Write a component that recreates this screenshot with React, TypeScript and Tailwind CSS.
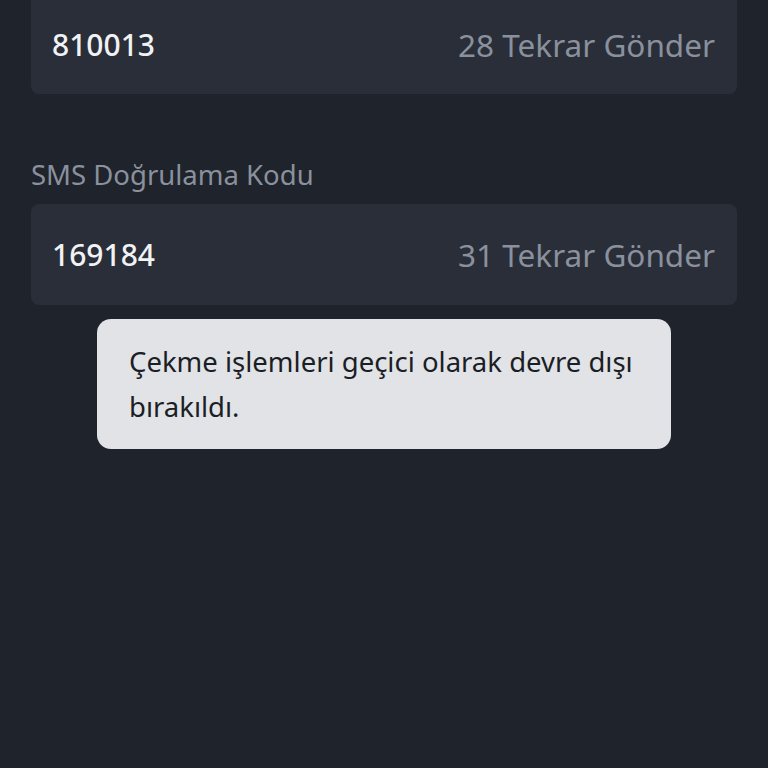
export default function App() {
  return (
    <div className="w-[768px] h-[768px] bg-[#1f232b] overflow-hidden" style={{ fontFamily: '"Noto Sans", "IBM Plex Sans", sans-serif' }}>
      <div className="px-[31px] pt-0">
        <div className="h-[94px] rounded-b-[8px] bg-[#292e39] flex items-center justify-between pl-[21px] pr-[22px] pb-[5px]">
          <span className="text-[30px] text-[#f1f2f4] font-medium">810013</span>
          <span className="text-[31.5px] text-[#8a919d]">28 Tekrar Gönder</span>
        </div>
        <div className="mt-[62px] text-[27.5px] text-[#8a919d] leading-[38px]">SMS Doğrulama Kodu</div>
        <div className="mt-[10px] h-[101px] rounded-[8px] bg-[#292e39] flex items-center justify-between pl-[21px] pr-[22px]">
          <span className="text-[30px] text-[#f1f2f4] font-medium">169184</span>
          <span className="text-[31.5px] text-[#8a919d]">31 Tekrar Gönder</span>
        </div>
      </div>
      <div className="px-[97px] mt-[14px]">
        <div className="w-[574px] h-[130px] rounded-[14px] bg-[#e1e3e7] px-[32px] pt-[20px] text-[27.5px] leading-[45px] text-[#1b1e25]">
          Çekme işlemleri geçici olarak devre dışı bırakıldı.
        </div>
      </div>
    </div>
  );
}
